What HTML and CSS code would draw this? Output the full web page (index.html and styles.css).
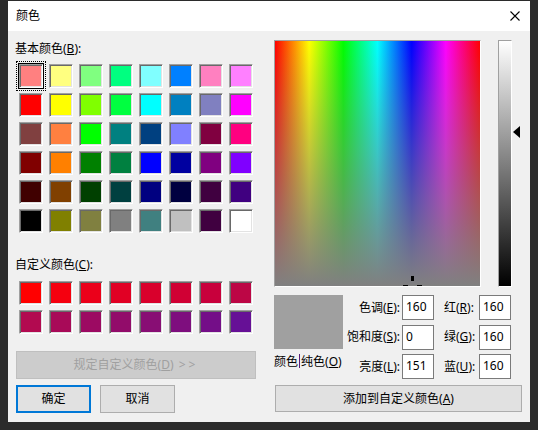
FILE: index.html
```html
<!DOCTYPE html>
<html lang="zh-CN">
<head>
<meta charset="utf-8">
<title>颜色</title>
<link rel="stylesheet" href="styles.css">
</head>
<body>
<div class="window">
  <div class="titlebar">
    <span class="title">颜色</span>
    <svg class="close" width="10" height="10" viewBox="0 0 10 10"><path d="M0.5 0.5 L9.5 9.5 M9.5 0.5 L0.5 9.5" stroke="#000" stroke-width="1.1" fill="none"/></svg>
  </div>
  <div class="content">
    <div class="left">
      <div class="label">基本颜色(<u>B</u>):</div>
      <div class="swatches basic">
        <div class="sw selected" style="background:#ff8080"></div>
        <div class="sw" style="background:#ffff80"></div>
        <div class="sw" style="background:#80ff80"></div>
        <div class="sw" style="background:#00ff80"></div>
        <div class="sw" style="background:#80ffff"></div>
        <div class="sw" style="background:#0080ff"></div>
        <div class="sw" style="background:#ff80c0"></div>
        <div class="sw" style="background:#ff80ff"></div>
        <div class="sw" style="background:#ff0000"></div>
        <div class="sw" style="background:#ffff00"></div>
        <div class="sw" style="background:#80ff00"></div>
        <div class="sw" style="background:#00ff40"></div>
        <div class="sw" style="background:#00ffff"></div>
        <div class="sw" style="background:#0080c0"></div>
        <div class="sw" style="background:#8080c0"></div>
        <div class="sw" style="background:#ff00ff"></div>
        <div class="sw" style="background:#804040"></div>
        <div class="sw" style="background:#ff8040"></div>
        <div class="sw" style="background:#00ff00"></div>
        <div class="sw" style="background:#008080"></div>
        <div class="sw" style="background:#004080"></div>
        <div class="sw" style="background:#8080ff"></div>
        <div class="sw" style="background:#800040"></div>
        <div class="sw" style="background:#ff0080"></div>
        <div class="sw" style="background:#800000"></div>
        <div class="sw" style="background:#ff8000"></div>
        <div class="sw" style="background:#008000"></div>
        <div class="sw" style="background:#008040"></div>
        <div class="sw" style="background:#0000ff"></div>
        <div class="sw" style="background:#0000a0"></div>
        <div class="sw" style="background:#800080"></div>
        <div class="sw" style="background:#8000ff"></div>
        <div class="sw" style="background:#400000"></div>
        <div class="sw" style="background:#804000"></div>
        <div class="sw" style="background:#004000"></div>
        <div class="sw" style="background:#004040"></div>
        <div class="sw" style="background:#000080"></div>
        <div class="sw" style="background:#000040"></div>
        <div class="sw" style="background:#400040"></div>
        <div class="sw" style="background:#400080"></div>
        <div class="sw" style="background:#000000"></div>
        <div class="sw" style="background:#808000"></div>
        <div class="sw" style="background:#808040"></div>
        <div class="sw" style="background:#808080"></div>
        <div class="sw" style="background:#408080"></div>
        <div class="sw" style="background:#c0c0c0"></div>
        <div class="sw" style="background:#400040"></div>
        <div class="sw" style="background:#ffffff"></div>
      </div>
      <div class="label custom-label">自定义颜色(<u>C</u>):</div>
      <div class="swatches custom">
        <div class="sw" style="background:#ff0000"></div>
        <div class="sw" style="background:#f5000f"></div>
        <div class="sw" style="background:#eb001a"></div>
        <div class="sw" style="background:#e10024"></div>
        <div class="sw" style="background:#d9002c"></div>
        <div class="sw" style="background:#d00034"></div>
        <div class="sw" style="background:#c8003c"></div>
        <div class="sw" style="background:#bc0645"></div>
        <div class="sw" style="background:#b20a50"></div>
        <div class="sw" style="background:#a80a58"></div>
        <div class="sw" style="background:#9c0a62"></div>
        <div class="sw" style="background:#920c6a"></div>
        <div class="sw" style="background:#880e74"></div>
        <div class="sw" style="background:#7e0e7e"></div>
        <div class="sw" style="background:#740e88"></div>
        <div class="sw" style="background:#661096"></div>
      </div>
      <button class="btn wide" disabled>规定自定义颜色(<u>D</u>) <span class="arrows">&gt;&gt;</span></button>
      <div class="btn-row">
        <button class="btn small default">确定</button>
        <button class="btn small">取消</button>
      </div>
    </div>
    <div class="right">
      <div class="top-row">
        <div class="spectrum">
          <div class="cross c-top"></div>
          <div class="cross c-left"></div>
          <div class="cross c-right"></div>
        </div>
        <div class="lum"></div>
        <div class="arrow"></div>
      </div>
      <div class="fields">
        <div class="preview"></div>
        <div class="flabel l1 r1">色调(<u>E</u>):</div>
        <div class="input i1 r1">160</div>
        <div class="flabel l2 r1">红(<u>R</u>):</div>
        <div class="input i2 r1">160</div>
        <div class="flabel l1 r2">饱和度(<u>S</u>):</div>
        <div class="input i1 r2">0</div>
        <div class="flabel l2 r2">绿(<u>G</u>):</div>
        <div class="input i2 r2">160</div>
        <div class="solid r3">颜色<span class="sep"></span>纯色(<u>O</u>)</div>
        <div class="flabel l1 r3">亮度(<u>L</u>):</div>
        <div class="input i1 r3">151</div>
        <div class="flabel l2 r3">蓝(<u>U</u>):</div>
        <div class="input i2 r3">160</div>
      </div>
      <button class="btn add">添加到自定义颜色(<u>A</u>)</button>
    </div>
  </div>
</div>
</body>
</html>
```
FILE: styles.css
```css
* { box-sizing: border-box; }
html, body { margin: 0; padding: 0; }
body {
  width: 538px;
  height: 430px;
  background: #2b2b2b;
  font-family: "Noto Sans", "Noto Sans CJK SC", sans-serif;
  font-size: 12px;
  color: #000;
  overflow: hidden;
}
u { text-decoration: underline; text-underline-offset: 1px; }

.window {
  margin: 1px 0 0 8px;
  width: 522px;
  height: 421px;
  background: #f0f0f0;
}
.titlebar {
  height: 30px;
  background: #fff;
  display: flex;
  align-items: center;
  justify-content: space-between;
  padding: 0 10px 0 8px;
}
.title { line-height: 16px; }
.close { display: block; margin-top: -1px; }

.content {
  display: flex;
  padding-left: 7px;
}
.left {
  width: 259px;
  padding-top: 10px;
  display: flex;
  flex-direction: column;
  align-items: flex-start;
}
.label { line-height: 16px; height: 16px; }
.custom-label { margin-top: 24px; }

.swatches {
  display: grid;
  grid-template-columns: repeat(8, 24px);
  column-gap: 6px;
  row-gap: 5px;
  margin-left: 4px;
}
.basic { margin-top: 7px; }
.custom { margin-top: 8px; }
.sw {
  width: 24px;
  height: 24px;
  border: 1px solid;
  border-color: #a0a0a0 #ffffff #ffffff #a0a0a0;
  box-shadow: inset 1px 1px 0 #696969, inset -1px -1px 0 #e3e3e3;
}
.sw.selected {
  outline: 1px dotted #000;
  outline-offset: 2px;
  box-shadow: 0 0 0 1px #000, inset 1px 1px 0 #696969, inset -1px -1px 0 #e3e3e3;
}

.btn {
  font: inherit;
  font-size: 12px;
  line-height: 16px;
  color: #000;
  background: #e1e1e1;
  border: 1px solid #adadad;
  padding: 0;
  margin: 0;
  height: 28px;
}
.btn.wide {
  margin-top: 17px;
  margin-left: 1px;
  width: 240px;
  background: #cccccc;
  border-color: #bfbfbf;
  color: #a0a0a0;
}
.arrows { letter-spacing: 3px; margin-left: 2px; }
.btn-row {
  display: flex;
  gap: 9px;
  margin-top: 6px;
  margin-left: 1px;
}
.btn.small { width: 75px; }
.btn.default { border: 2px solid #0078d7; }

.right {
  width: 248px;
  padding-top: 9px;
  display: flex;
  flex-direction: column;
  align-items: flex-start;
}
.top-row {
  display: flex;
  align-items: flex-start;
  height: 247px;
}
.spectrum {
  position: relative;
  width: 207px;
  height: 247px;
  border: 1px solid;
  border-color: #a0a0a0 #ffffff #ffffff #a0a0a0;
  background:
    linear-gradient(to bottom, rgba(128,128,128,0), rgb(128,128,128)),
    linear-gradient(to right, #ff0000 0%, #ffff00 16.67%, #00ff00 33.33%, #00ffff 50%, #0000ff 66.67%, #ff00ff 83.33%, #ff0000 100%);
  overflow: hidden;
}
.cross { position: absolute; background: #000; }
.c-top { left: 136px; top: 235px; width: 3px; height: 5px; }
.c-left { left: 128px; top: 244px; width: 5px; height: 2px; }
.c-right { left: 142px; top: 244px; width: 5px; height: 2px; }

.lum {
  margin-left: 17px;
  width: 14px;
  height: 247px;
  border: 1px solid;
  border-color: #a0a0a0 #ffffff #ffffff #a0a0a0;
  background: linear-gradient(to bottom, #ffffff, #000000);
}
.arrow {
  margin-left: 1px;
  margin-top: 86px;
  width: 0;
  height: 0;
  border-top: 6px solid transparent;
  border-bottom: 6px solid transparent;
  border-right: 7px solid #000;
}

.fields {
  margin-top: 8px;
  display: grid;
  grid-template-columns: 69px 59px 32px 45px 32px;
  grid-template-rows: 25px 25px 25px;
  row-gap: 4.5px;
}
.preview {
  grid-column: 1;
  grid-row: 1 / span 2;
  height: 54px;
  background: #a0a0a0;
}
.r1 { grid-row: 1; }
.r2 { grid-row: 2; }
.r3 { grid-row: 3; }
.flabel {
  line-height: 16px;
  align-self: center;
  white-space: nowrap;
}
.l1 { grid-column: 2; text-align: right; padding-right: 2px; }
.l2 { grid-column: 4; padding-left: 10px; }
.i1 { grid-column: 3; }
.i2 { grid-column: 5; }
.input {
  background: #fff;
  border: 1px solid #7a7a7a;
  padding: 3px 0 0 3px;
  line-height: 16px;
}
.solid {
  grid-column: 1 / span 2;
  line-height: 16px;
  white-space: nowrap;
  align-self: start;
}
.sep {
  display: inline-block;
  width: 1px;
  height: 14px;
  margin: 0 1px;
  vertical-align: -2px;
  background: #5a1f7a;
}

.btn.add {
  margin-top: 6px;
  margin-left: 1px;
  width: 247px;
  height: 27px;
}
```
